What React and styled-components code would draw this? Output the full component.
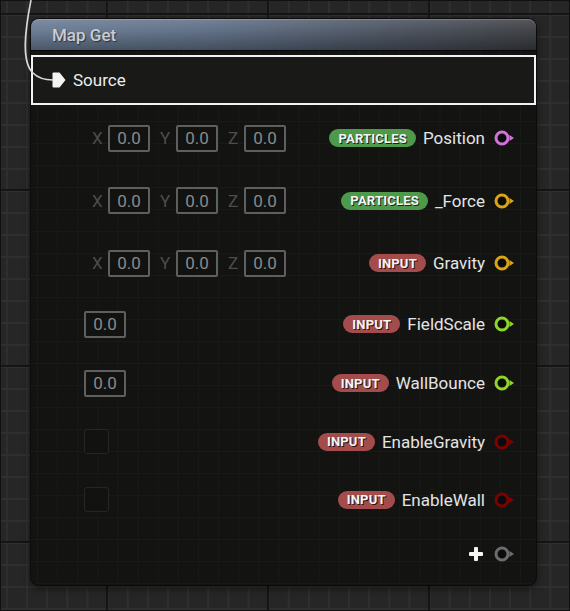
import styled, { createGlobalStyle } from 'styled-components';

const GlobalStyle = createGlobalStyle`
  html, body {
    margin: 0;
    padding: 0;
    background: #262626;
  }
  body {
    font-family: Roboto, "Liberation Sans", sans-serif;
  }
`;

// graph canvas with minor / major grid lines
const Canvas = styled.div`
  position: relative;
  width: 570px;
  height: 611px;
  overflow: hidden;
  box-sizing: border-box;
  padding: 19px 34px 0 31px;
  background-color: #262626;
  background-image:
    linear-gradient(90deg, #151515 2px, transparent 2px),
    linear-gradient(180deg, #151515 2px, transparent 2px),
    linear-gradient(90deg, #2f2f2f 2px, transparent 2px),
    linear-gradient(180deg, #2f2f2f 2px, transparent 2px);
  background-size: 161px 100%, 100% 176px, 20.125px 100%, 100% 22px;
  background-position: 106px 0, 0 13px, 6px 0, 0 14px;
  box-shadow: inset 0 0 0 1px #101010;
`;

const Wire = styled.svg`
  position: absolute;
  left: 0;
  top: 0;
  pointer-events: none;
  z-index: 2;
`;

const Node = styled.div`
  width: 505px;
  height: 566px;
  border-radius: 8px;
  background-color: #131412;
  background-image:
    linear-gradient(90deg, #181a17 1px, transparent 1px),
    linear-gradient(180deg, #181a17 1px, transparent 1px);
  background-size: 20.125px 100%, 100% 22px;
  background-position: 6px 0, 0 14px;
  box-shadow: 0 0 0 1px #0b0b0b, 0 3px 8px rgba(0, 0, 0, 0.55);
  display: flex;
  flex-direction: column;
`;

const Header = styled.div`
  height: 31px;
  border-radius: 8px 8px 0 0;
  display: flex;
  align-items: center;
  padding-left: 21px;
  font-size: 17px;
  font-weight: 500;
  color: #c9ccd0;
  text-shadow: 1px 1px 1px rgba(0, 0, 0, 0.5);
  background:
    linear-gradient(180deg, rgba(255, 255, 255, 0.14) 0%, rgba(255, 255, 255, 0.04) 35%, rgba(0, 0, 0, 0.28) 100%),
    linear-gradient(90deg, #687a92 0%, #5d6d84 35%, #4a5260 70%, #3a3c40 100%);
  box-shadow: inset 0 1px 0 rgba(255, 255, 255, 0.18);
  border-bottom: 1px solid #080808;
`;

const SourceRow = styled.div`
  margin-top: 4px;
  height: 50px;
  box-sizing: border-box;
  border: 2px solid #f2f2f2;
  background: #191a18;
  display: flex;
  align-items: center;
  gap: 7px;
  padding-left: 19px;
  font-size: 17px;
  color: #ececec;
`;

const Rows = styled.div`
  display: flex;
  flex-direction: column;
  padding-top: 2px;
`;

const Row = styled.div`
  height: ${(p) => p.$h}px;
  display: flex;
  align-items: center;
  justify-content: space-between;
  padding: 0 20px 0 53px;
`;

const Inputs = styled.div`
  display: flex;
  align-items: center;
  margin-left: ${(p) => (p.$vector ? 8 : 0)}px;
`;

const Axis = styled.span`
  font-size: 17px;
  color: #4d4d4d;
  width: 16px;
`;

const NumBox = styled.div`
  width: 42px;
  height: 27px;
  box-sizing: border-box;
  border: 2px solid #5f5f5f;
  border-radius: 2px;
  background: #121311;
  color: #8a8a8a;
  font-size: 17px;
  display: flex;
  align-items: center;
  justify-content: center;
  margin-right: ${(p) => (p.$gap ? 10 : 0)}px;
`;

const Check = styled.div`
  width: 25px;
  height: 25px;
  box-sizing: border-box;
  border: 1px solid #262725;
  border-radius: 3px;
  background: #121311;
`;

const Output = styled.div`
  display: flex;
  align-items: center;
`;

const Badge = styled.span`
  height: 18px;
  padding: 0 9px;
  border-radius: 9px;
  display: inline-flex;
  align-items: center;
  font-size: 13px;
  font-weight: 700;
  letter-spacing: 0.2px;
  color: #f4f4f4;
  text-shadow: 1px 1px 0 rgba(0, 0, 0, 0.75);
  background: ${(p) => (p.$kind === 'particles' ? '#4d9a4b' : '#a44c4c')};
  margin-right: 7px;
`;

const Label = styled.span`
  font-size: 17px;
  color: #e4e4e4;
  margin-right: 9px;
`;

const Plus = styled.span`
  position: relative;
  width: 14px;
  height: 14px;
  margin-right: 11px;

  &::before,
  &::after {
    content: '';
    position: absolute;
    background: #f4f4f4;
    border-radius: 1px;
  }
  &::before {
    left: 0;
    top: 5px;
    width: 14px;
    height: 4px;
  }
  &::after {
    left: 5px;
    top: 0;
    width: 4px;
    height: 14px;
  }
`;

function ExecPin() {
  return (
    <svg width="14" height="16" viewBox="0 0 14 16">
      <path d="M1.5 0.5 H7.5 L13.5 8 L7.5 15.5 H1.5 Q0.5 15.5 0.5 14.5 V1.5 Q0.5 0.5 1.5 0.5 Z" fill="#f4f4f4" />
    </svg>
  );
}

function DataPin({ color }) {
  return (
    <svg width="22" height="16" viewBox="0 0 22 16">
      <circle cx="8" cy="8" r="6" fill="#0b0b0b" stroke={color} strokeWidth="3" />
      <path d="M15.5 5 L20 8 L15.5 11 Z" fill={color} />
    </svg>
  );
}

const rows = [
  { h: 62, kind: 'vector', badge: 'particles', tag: 'PARTICLES', label: 'Position', pin: '#d272da' },
  { h: 63, kind: 'vector', badge: 'particles', tag: 'PARTICLES', label: '_Force', pin: '#d9a517' },
  { h: 62, kind: 'vector', badge: 'input', tag: 'INPUT', label: 'Gravity', pin: '#d9a517' },
  { h: 60, kind: 'float', badge: 'input', tag: 'INPUT', label: 'FieldScale', pin: '#8fd428' },
  { h: 58, kind: 'float', badge: 'input', tag: 'INPUT', label: 'WallBounce', pin: '#8fd428' },
  { h: 59, kind: 'bool', badge: 'input', tag: 'INPUT', label: 'EnableGravity', pin: '#7c0202' },
  { h: 57, kind: 'bool', badge: 'input', tag: 'INPUT', label: 'EnableWall', pin: '#7c0202' },
];

function LeftInputs({ kind }) {
  if (kind === 'vector') {
    return (
      <Inputs $vector>
        <Axis>X</Axis>
        <NumBox $gap>0.0</NumBox>
        <Axis>Y</Axis>
        <NumBox $gap>0.0</NumBox>
        <Axis>Z</Axis>
        <NumBox>0.0</NumBox>
      </Inputs>
    );
  }
  if (kind === 'float') {
    return (
      <Inputs>
        <NumBox>0.0</NumBox>
      </Inputs>
    );
  }
  return (
    <Inputs>
      <Check />
    </Inputs>
  );
}

export default function App() {
  return (
    <>
      <GlobalStyle />
      <Canvas>
        <Wire width="70" height="100" viewBox="0 0 70 100">
          <path d="M31 0 C25 30 21 62 33 73 C38 78 45 80 53 80" fill="none" stroke="#d8d8d8" strokeWidth="1.6" />
        </Wire>
        <Node>
          <Header>Map Get</Header>
          <SourceRow>
            <ExecPin />
            Source
          </SourceRow>
          <Rows>
            {rows.map((r) => (
              <Row key={r.label} $h={r.h}>
                <LeftInputs kind={r.kind} />
                <Output>
                  <Badge $kind={r.badge}>{r.tag}</Badge>
                  <Label>{r.label}</Label>
                  <DataPin color={r.pin} />
                </Output>
              </Row>
            ))}
            <Row $h={52}>
              <span />
              <Output>
                <Plus />
                <DataPin color="#6c6c6c" />
              </Output>
            </Row>
          </Rows>
        </Node>
      </Canvas>
    </>
  );
}
